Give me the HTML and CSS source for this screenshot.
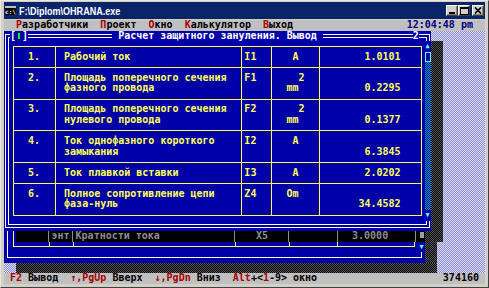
FILE: index.html
```html
<!DOCTYPE html>
<html lang="ru">
<head>
  <meta charset="UTF-8">
  <title>F:\Diplom\OHRANA.exe</title>
  <link rel="stylesheet" href="styles.css">
</head>
<body>

<div class="win">
  <div class="titlebar">
    <span class="appicon">c:\</span>
    <span class="apptitle">F:\Diplom\OHRANA.exe</span>
    <div class="tbtns">
      <span class="tbtn"><svg width="8" height="7" viewBox="0 0 8 7"><rect x="1" y="5" width="6" height="2" fill="#000"/></svg></span>
      <span class="tbtn"><svg width="9" height="8" viewBox="0 0 9 8"><rect x="0.5" y="0.5" width="8" height="7" fill="none" stroke="#000"/><rect x="0" y="0" width="9" height="2" fill="#000"/></svg></span>
      <span class="tbtn close"><svg width="8" height="7" viewBox="0 0 8 7"><path d="M1 0.5 L7 6.5 M7 0.5 L1 6.5" stroke="#000" stroke-width="1.6"/></svg></span>
    </div>
  </div>

  <div class="console">
    <div class="menubar">
      <span class="txt">  <b>Р</b>азработчики  <b>П</b>роект  <b>О</b>кно  <b>К</b>алькулятор  <b>В</b>ыход</span>
      <span class="txt clock">12:04:48 pm  </span>
    </div>

    <div class="desktop">
      <!-- shadows of the back window -->
      <div class="shadow sh-back-r"></div>
      <div class="shadow sh-back-b"></div>

      <!-- back window, mostly hidden -->
      <div class="backwin">
        <div class="brow">
          <span class="vl white"></span>
          <span class="vl yellow"></span>
          <div class="shade">
            <span class="sc w1"></span>
            <span class="sc w2">энт</span>
            <span class="sc w3">Кратности тока</span>
            <span class="sc w4">   X5</span>
            <span class="sc w5"></span>
            <span class="sc w6">  3.0000</span>
            <span class="sgap"></span>
            <span class="sthumb"><i></i></span>
          </div>
        </div>
        <div class="brow">
          <span class="vl white"></span>
          <div class="bline-wrap">
            <div class="bline">
              <span class="seg s1"></span><span class="seg s2"></span><span class="seg s3"></span><span class="seg s4"></span><span class="seg s5"></span><span class="seg s6 last"></span>
            </div>
          </div>
          <span class="arrow">▼</span>
        </div>
        <div class="brow">
          <span class="bframe-bot"></span>
        </div>
      </div>

      <!-- dialog -->
      <div class="shadow sh-dlg-r"></div>
      <div class="dialog">
        <div class="dlg-top">
          <span class="corner tl"></span>
          <span class="closebox">[<i></i>]</span>
          <span class="dline lw"></span>
          <span class="dtitle"> Расчет защитного зануления. Вывод </span>
          <span class="dline grow"></span>
          <span class="wnum">2</span>
          <span class="dline cw"></span>
          <span class="corner tr"></span>
        </div>

        <div class="dlg-mid">
          <div class="vline"></div>
          <div class="dlg-body">
            <div class="grid">
              <div class="c">  1.</div><div class="c"> Рабочий ток</div><div class="c">I1</div><div class="c">   A</div><div class="c val">1.0101</div>
              <div class="c">  2.</div><div class="c"> Площадь поперечного сечения
 фазного провода</div><div class="c">F1</div><div class="c">    2
  mm</div><div class="c val">
0.2295</div>
              <div class="c">  3.</div><div class="c"> Площадь поперечного сечения
 нулевого провода</div><div class="c">F2</div><div class="c">    2
  mm</div><div class="c val">
0.1377</div>
              <div class="c">  4.</div><div class="c"> Ток однофазного короткого
 замыкания</div><div class="c">I2</div><div class="c">   A</div><div class="c val">
6.3845</div>
              <div class="c">  5.</div><div class="c"> Ток плавкой вставки</div><div class="c">I3</div><div class="c">   A</div><div class="c val">2.0202</div>
              <div class="c">  6.</div><div class="c"> Полное сопротивление цепи
 фаза-нуль</div><div class="c">Z4</div><div class="c">  Om</div><div class="c val">
34.4582</div>
            </div>
          </div>
          <div class="scroll">
            <span class="arrow">▲</span>
            <span class="thumb"></span>
            <span class="track"></span>
            <span class="arrow">▼</span>
          </div>
        </div>

        <div class="dlg-bot">
          <span class="corner bl"></span>
          <span class="dline grow"></span>
          <span class="corner br"></span>
        </div>
      </div>
    </div>

    <div class="statusbar">
      <span class="txt"> <b>F2</b> Вывод  <b>↑,PgUp</b> Вверх  <b>↓,PgDn</b> Вниз  <b>Alt</b>+&lt;<b>1</b>-9&gt; окно</span>
      <span class="txt">374160 </span>
    </div>
  </div>
</div>

</body>
</html>
```

FILE: styles.css
```css
* { box-sizing: border-box; }
body { margin: 0; background: #d4d0c8; }

/* windows frame */
.win { width: 489px; height: 288px; background: #d4d0c8; border: 1px solid; border-color: #e8e6e0 #404040 #404040 #e8e6e0; padding: 1px 3px 3px 3px; }
.titlebar { height: 17px; margin-bottom: 1px; background: #0a246a; display: flex; align-items: center; }
.appicon { margin-left: 1px; width: 11px; height: 9px; background: #000; border-top: 2px solid #c0c0c0; color: #fff; font: bold 6px/7px "DejaVu Sans Mono", monospace; text-align: center; overflow: hidden; }
.apptitle { margin-left: 3px; color: #fff; font: bold 11px "Liberation Sans", Arial, sans-serif; transform: scaleX(0.82); transform-origin: left center; white-space: nowrap; }
.tbtns { margin-left: auto; margin-right: 1px; display: flex; }
.tbtn { width: 12px; height: 11px; background: #d4d0c8; border: 1px solid; border-color: #fff #404040 #404040 #fff; box-shadow: inset -1px -1px #808080; display: flex; align-items: center; justify-content: center; }
.tbtn.close { margin-left: 2px; }

/* console, 80 x 25 cells of 6.01 x 10.56 */
.console { width: 481px; height: 264px; font: bold 10px/10.56px "DejaVu Sans Mono", monospace; display: flex; flex-direction: column; }
.txt { white-space: pre; }
.txt b { color: #a80000; font-weight: bold; }

.menubar, .statusbar { height: 10.56px; background: #c0c0c0; color: #000; display: flex; justify-content: space-between; }
.clock { color: #000080; }

.desktop { position: relative; height: 242.88px; background: repeating-conic-gradient(#dcdcf6 0 25%, #8c8cd2 0 50%) 0 0 / 2px 2px; }
.shadow { position: absolute; background: repeating-conic-gradient(#000 0 25%, #5a5a5a 0 50%) 0 0 / 2px 2px; }
.sh-back-r { left: 420.7px; top: 190.08px; width: 12.02px; height: 52.8px; }
.sh-back-b { left: 12.02px; top: 232.32px; width: 420.7px; height: 10.56px; }
.sh-dlg-r { left: 426.71px; top: 10.56px; width: 12.02px; height: 200.64px; }

/* back window */
.backwin { position: absolute; left: 0; top: 200.64px; width: 420.7px; height: 31.68px; background: #0000a8; }
.brow { height: 10.56px; display: flex; }
.vl { width: 6.01px; height: 100%; background: linear-gradient(currentColor, currentColor) 2.5px 0 / 1px 100% no-repeat; }
.vl.white { color: #fff; }
.vl.yellow { color: #ffff55; }
.shade { width: 408.68px; background: #000; color: #8c8c8c; display: flex; }
.sc { height: 100%; border-right: 1px solid #8c8c8c; padding-left: 2.5px; white-space: pre; }
.w1 { width: 33.06px; }
.w2 { width: 24.04px; }
.w3 { width: 162.27px; }
.w4 { width: 54.09px; }
.w5 { width: 48.08px; }
.w6 { width: 78.13px; }
.sgap { width: 3px; }
.sthumb { width: 6.01px; display: flex; justify-content: center; padding-top: 1px; }
.sthumb i { width: 4px; height: 6px; background: #a0a0a0; }
.bline-wrap { width: 402.67px; margin-left: 2.5px; margin-right: 3.5px; }
.bline { height: 5.78px; border-bottom: 1px solid #ffff55; display: flex; }
.seg { height: 100%; border-left: 1px solid #ffff55; }
.seg.last { border-right: 1px solid #ffff55; }
.s1 { width: 36.06px; }
.s2 { width: 24.04px; }
.s3 { width: 162.27px; }
.s4 { width: 54.09px; }
.s5 { width: 48.08px; }
.s6 { width: 78.13px; }
.bframe-bot { margin-left: 2.5px; width: 415.69px; height: 5.78px; border: 1px solid #fff; border-top: none; }
.arrow { width: 6.01px; height: 10.56px; color: #55ffff; font-size: 7px; line-height: 10.56px; text-align: center; }

/* dialog */
.dialog { position: absolute; left: 0; top: 0; width: 426.71px; height: 200.64px; background: #0000a8; color: #fff; display: flex; flex-direction: column; }
.dlg-top, .dlg-bot { height: 10.56px; display: flex; flex: none; }
.dline { height: 4px; margin-top: 3.28px; border-top: 1px solid #fff; border-bottom: 1px solid #fff; }
.dline.lw { width: 84.14px; }
.dline.cw { width: 6.01px; }
.dline.grow { flex: 1; }
.corner { width: 5.01px; border: 0 double #fff; }
.corner.tl { margin: 3.28px 0 0 1px; border-top-width: 4px; border-left-width: 4px; }
.corner.tr { width: 5px; margin: 3.28px 1.01px 0 0; border-top-width: 4px; border-right-width: 4px; }
.corner.bl { height: 7.28px; margin-left: 1px; border-bottom-width: 4px; border-left-width: 4px; }
.corner.br { width: 5px; height: 7.28px; margin-right: 1.01px; border-bottom-width: 4px; border-right-width: 4px; }
.closebox { width: 18.03px; white-space: pre; display: flex; align-items: center; justify-content: center; gap: 2px; }
.closebox i { width: 3px; height: 6px; background: #00ff00; }
.dtitle, .wnum { white-space: pre; }
.wnum { width: 6.01px; }

.dlg-mid { flex: 1; display: flex; }
.vline { width: 5.01px; margin-left: 1px; border-left: 4px double #fff; }
.dlg-body { flex: 1; }
.grid { margin: 4.78px 0 0 2.5px; display: grid; grid-template-columns: 42.07px 186.31px 30.05px 48.08px 102.17px; grid-template-rows: 21.12px 31.68px 31.68px 31.68px 21.12px 31.68px; border-top: 1px solid #ffff55; border-left: 1px solid #ffff55; width: 409.68px; }
.c { border-right: 1px solid #ffff55; border-bottom: 1px solid #ffff55; padding: 4.78px 0 0 2.5px; color: #ffff55; white-space: pre; }
.c.val { text-align: right; padding-right: 20.5px; }

.scroll { width: 6.01px; display: flex; flex-direction: column; background: repeating-conic-gradient(#00a8a8 0 25%, #0000a8 0 50%) 0 0 / 2px 2px; }
.scroll .arrow { background: #0000a8; }
.thumb { height: 10.56px; background: #0000a8; border: 1px solid #55ffff; }
.track { flex: 1; }
```
